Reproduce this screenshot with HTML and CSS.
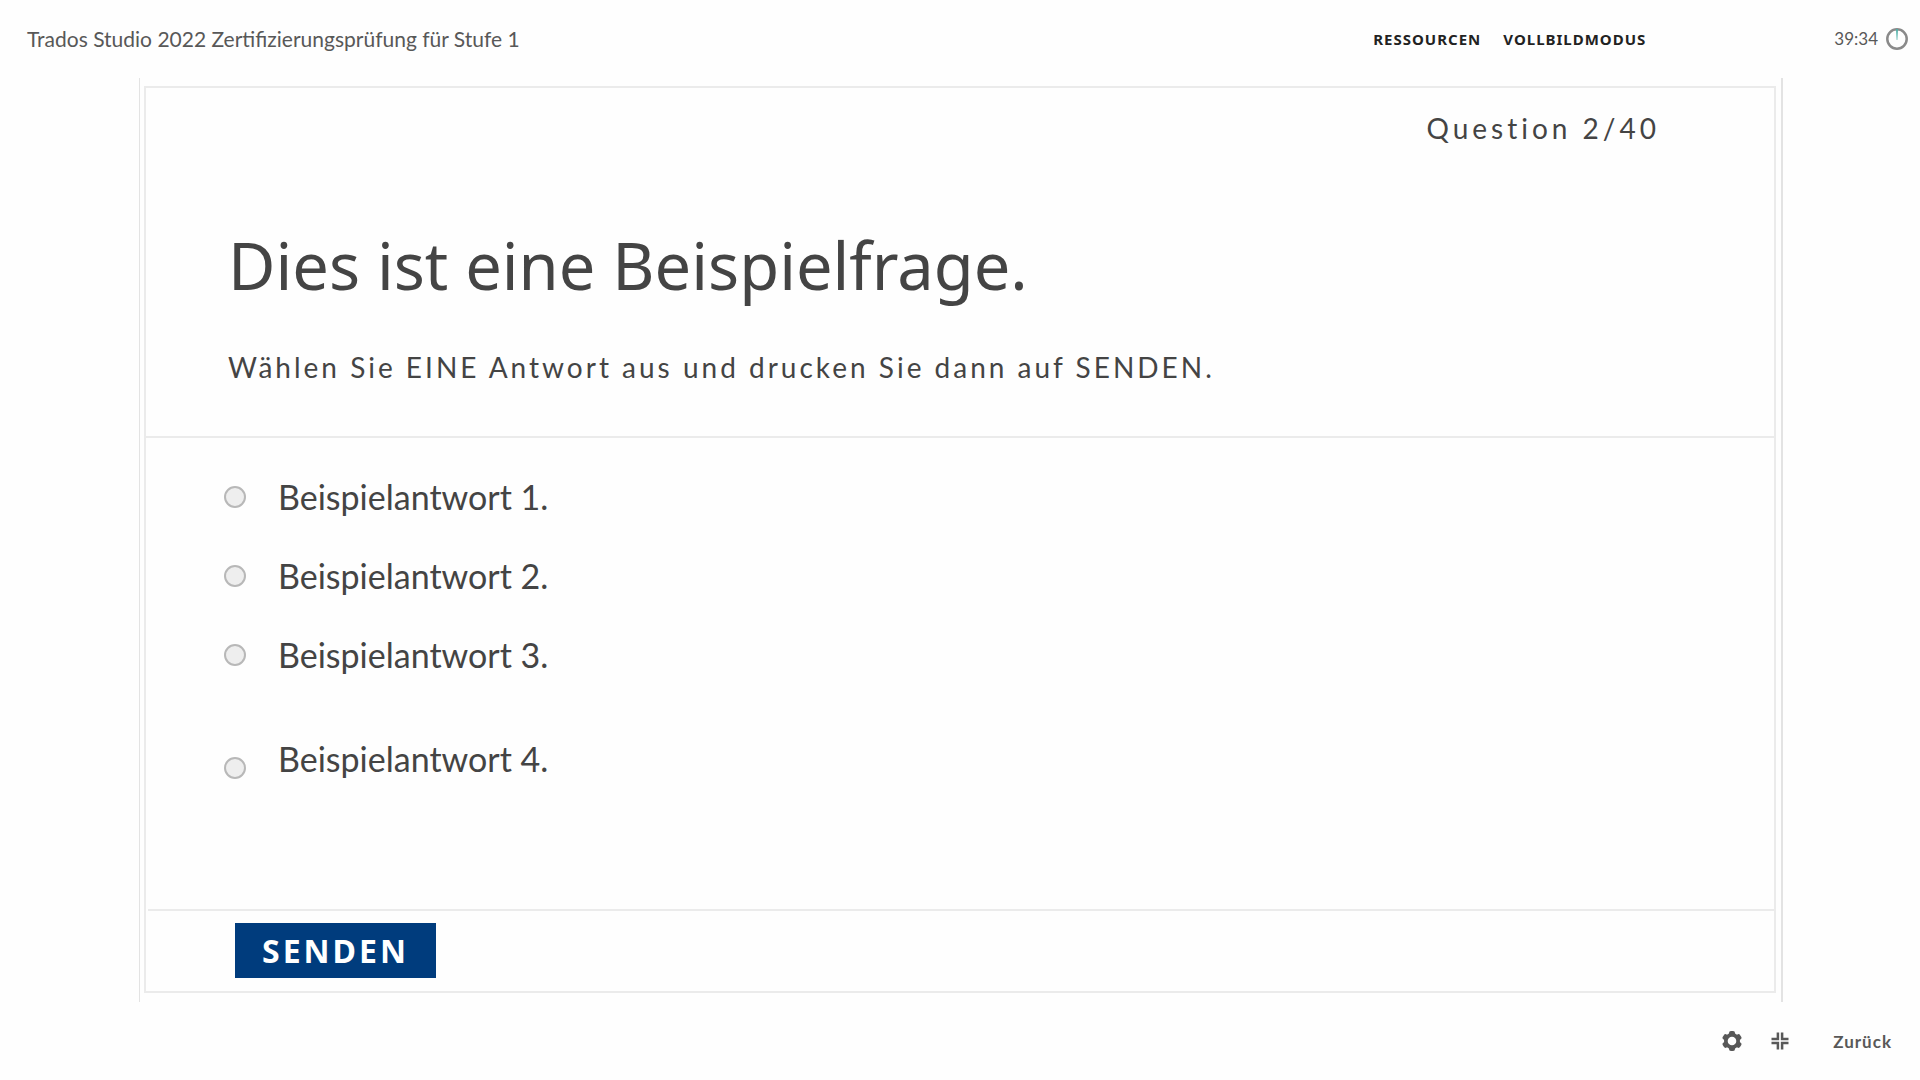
FILE: index.html
```html
<!DOCTYPE html>
<html lang="de">
<head>
<meta charset="utf-8">
<meta name="viewport" content="width=device-width, initial-scale=1">
<title>Trados Studio 2022 Zertifizierungsprüfung für Stufe 1</title>
<link rel="stylesheet" href="styles.css">
</head>
<body>
<div class="player">
  <header class="topbar">
    <h1 class="course-title">Trados Studio 2022 Zertifizierungsprüfung für Stufe 1</h1>
    <nav class="topnav">
      <a class="topnav-link" href="#ressourcen">RESSOURCEN</a>
      <a class="topnav-link" href="#vollbild">VOLLBILDMODUS</a>
    </nav>
    <div class="timer">
      <span class="timer-value">39:34</span>
      <svg class="timer-dial" viewBox="0 0 22 22" aria-hidden="true">
        <circle cx="11" cy="11" r="9.700" fill="none" stroke="#8a8a8a" stroke-width="2.500"/>
        <path d="M10 1h2l-.7 11h-.6z" fill="#4fb0a8"/>
      </svg>
    </div>
  </header>

  <main class="stage">
    <form class="slide">
      <section class="prompt">
        <p class="counter">Question 2/40</p>
        <h2 class="question">Dies ist eine Beispielfrage.</h2>
        <p class="instruction">Wählen Sie EINE Antwort aus und drucken Sie dann auf SENDEN.</p>
      </section>
      <section class="answers">
        <label class="answer"><input class="answer-radio" type="radio" name="antwort" value="1">Beispielantwort 1.</label>
        <label class="answer"><input class="answer-radio" type="radio" name="antwort" value="2">Beispielantwort 2.</label>
        <label class="answer"><input class="answer-radio" type="radio" name="antwort" value="3">Beispielantwort 3.</label>
        <label class="answer answer-last"><input class="answer-radio" type="radio" name="antwort" value="4">Beispielantwort 4.</label>
      </section>
      <div class="actions">
        <button class="send" type="button">SENDEN</button>
      </div>
    </form>
  </main>

  <footer class="controls">
    <button class="control" type="button" aria-label="Einstellungen">
      <svg class="icon" viewBox="0 0 20 20" aria-hidden="true">
        <g fill="#585858">
          <rect x="7" y="0" width="6" height="20" rx="2"/>
          <rect x="7" y="0" width="6" height="20" rx="2" transform="rotate(60 10 10)"/>
          <rect x="7" y="0" width="6" height="20" rx="2" transform="rotate(120 10 10)"/>
          <circle cx="10" cy="10" r="8"/>
        </g>
        <circle cx="10" cy="10" r="4.300" fill="#fff"/>
      </svg>
    </button>
    <button class="control" type="button" aria-label="Vollbild beenden">
      <svg class="icon" viewBox="0 0 20 20" aria-hidden="true">
        <path d="M1.500 7.900H7.900V1.500M12.100 1.500V7.900H18.500M1.500 12.100H7.900V18.500M12.100 18.500V12.100H18.500" fill="none" stroke="#585858" stroke-width="2.500"/>
      </svg>
    </button>
    <button class="control back" type="button">Zurück</button>
  </footer>
</div>
</body>
</html>
```
FILE: styles.css
```css
* { box-sizing: border-box; }

body {
  margin: 0;
  background: #fefefe;
  color: #444;
  font-family: Lato, "Noto Sans", sans-serif;
}

h1, h2, p { margin: 0; font-weight: 400; }

button {
  margin: 0;
  padding: 0;
  border: 0;
  background: none;
  color: inherit;
  font: inherit;
  cursor: pointer;
}

.player {
  display: grid;
  grid-template-rows: 78px 1fr 78px;
  min-height: 100vh;
}

/* Top bar */
.topbar {
  display: flex;
  align-items: center;
  padding: 0 12px 0 27px;
}

.course-title {
  flex: 1;
  color: #585858;
  font-size: 21px;
  line-height: 24px;
}

.topnav {
  display: flex;
  gap: 22px;
  margin-right: 188px;
}

.topnav-link {
  color: #222;
  font-family: "Noto Sans", sans-serif;
  font-size: 15px;
  font-weight: 700;
  line-height: 24px;
  letter-spacing: 1px;
  text-decoration: none;
}

.timer {
  display: flex;
  align-items: center;
  gap: 8px;
  color: #585858;
  font-size: 17px;
  line-height: 24px;
}

.timer-dial {
  width: 22px;
  height: 22px;
}

/* Slide */
.stage {
  display: flex;
  margin: 0 137px 0 139px;
  padding: 8px 5px 9px 4px;
  border-left: 1px solid #e3e3e3;
  border-right: 2px solid #e3e3e3;
}

.slide {
  display: flex;
  flex: 1;
  flex-direction: column;
  border: 2px solid #ebebeb;
}

.prompt {
  padding: 20px 82px 49px;
  border-bottom: 2px solid #ebebeb;
}

.counter, .instruction {
  font-size: 28px;
  line-height: 40px;
}

.counter {
  padding-right: 32px;
  letter-spacing: 4px;
  text-align: right;
}

.question {
  margin: 73px 0 38px;
  font-family: "Noto Sans", sans-serif;
  font-size: 65px;
  line-height: 88px;
}

.instruction { letter-spacing: 3px; }

.answers {
  display: flex;
  flex: 1;
  flex-direction: column;
  align-items: flex-start;
  gap: 39px;
  padding: 39px 78px;
}

.answer {
  display: flex;
  align-items: center;
  gap: 32px;
  font-size: 34px;
  line-height: 40px;
}

.answer-last {
  align-items: flex-end;
  margin-top: 25px;
}

.answer-radio {
  appearance: none;
  width: 22px;
  height: 22px;
  margin: 0;
  border: 2px solid #b8b8b8;
  border-radius: 50%;
  background: #eee;
}

.answer-radio:checked { background: #003c7d; }

.actions {
  margin-left: 2px;
  padding: 12px 87px 13px;
  border-top: 2px solid #ebebeb;
}

.send {
  display: block;
  width: 201px;
  height: 55px;
  background: #003c7d;
  color: #fff;
  font-family: "Noto Sans", sans-serif;
  font-size: 32px;
  font-weight: 700;
  letter-spacing: 3px;
}

/* Bottom bar */
.controls {
  display: flex;
  align-items: center;
  justify-content: flex-end;
  gap: 28px;
  padding: 0 28px 0 27px;
}

.control { color: #585858; }

.icon {
  display: block;
  width: 20px;
  height: 20px;
}

.back {
  margin-left: 15px;
  font-size: 17px;
  font-weight: 700;
  letter-spacing: 1px;
}
```
